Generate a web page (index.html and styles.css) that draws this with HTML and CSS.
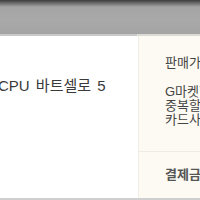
FILE: index.html
```html
<!DOCTYPE html>
<html>
<head>
<meta charset="utf-8">
<link rel="stylesheet" href="styles.css">
</head>
<body>
<div class="page">
  <div class="topbar"><div class="topbar-edge"><span class="edge-left"></span><span class="edge-right"></span></div></div>
  <div class="main">
    <div class="left">
      <div class="product">CPU 바트셀로 5</div>
    </div>
    <div class="right">
      <div class="block first">
        <div class="label">판매가격</div>
        <div class="discounts">
          <div class="line">G마켓할인</div>
          <div class="line">중복할인</div>
          <div class="line">카드사할인</div>
        </div>
      </div>
      <div class="block second">
        <div class="label bold">결제금액</div>
      </div>
    </div>
  </div>
  <div class="bottom"></div>
</div>
</body>
</html>
```
FILE: styles.css
```css
html, body { margin: 0; padding: 0; }
body {
  width: 200px;
  height: 200px;
  overflow: hidden;
  background: #fff;
  font-family: "Liberation Sans", "Noto Sans CJK KR", sans-serif;
  color: #333;
}
.page { display: flex; flex-direction: column; height: 200px; }
.topbar {
  height: 36px;
  flex: none;
  display: flex;
  flex-direction: column;
  justify-content: flex-end;
  background: linear-gradient(#3c3c3c 0px, #6a6a6a 3px, #a4a4a4 7px, #a9a9a9 20px, #a4a4a4 33px);
}
.topbar-edge { display: flex; height: 2px; }
.edge-left { width: 137px; background: #c8c8c8; }
.edge-right { flex: 1; background: #dcdcd6; }
.main { flex: 1; display: flex; min-height: 0; }
.left { width: 138px; flex: none; padding-top: 41px; overflow: hidden; }
.product {
  margin-left: -2px;
  font-size: 15px;
  line-height: 18px;
  white-space: nowrap;
  color: #3a3a3a;
  word-spacing: 2px;
}
.right {
  flex: 1;
  background: #fcfaf2;
  border-left: 1px solid #efede6;
  display: flex;
  flex-direction: column;
  overflow: hidden;
}
.block { white-space: nowrap; font-size: 13px; color: #444; padding-left: 26px; }
.first { padding-top: 18px; height: 116px; box-sizing: border-box; border-bottom: 1px solid #eeece4; }
.label { line-height: 18px; }
.discounts { margin-top: 13px; }
.line { line-height: 14px; height: 14px; }
.second { padding-top: 14px; }
.bold { font-weight: bold; color: #555; }
.bottom { height: 2px; flex: none; background: #cfcfcf; }
```
